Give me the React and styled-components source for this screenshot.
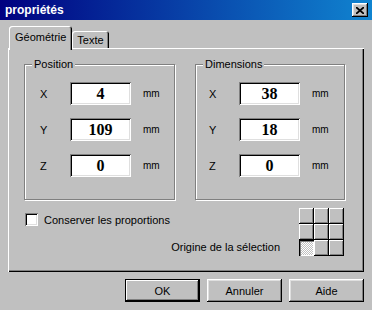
import React from "react";
import styled, { createGlobalStyle, css } from "styled-components";

const GlobalStyle = createGlobalStyle`
  body {
    margin: 0;
    background: #c0c0c0;
    font-family: "Liberation Sans", Arial, sans-serif;
    font-size: 11px;
    color: #000;
  }
`;

const raised = css`
  box-shadow: inset -1px -1px #000, inset 1px 1px #fff, inset -2px -2px #808080,
    inset 2px 2px #dfdfdf;
`;

const sunken = css`
  box-shadow: inset 1px 1px #808080, inset -1px -1px #fff, inset 2px 2px #000,
    inset -2px -2px #dfdfdf;
`;

const Window = styled.div`
  width: 372px;
  height: 310px;
  overflow: hidden;
  background: #c0c0c0;
  display: flex;
  flex-direction: column;
`;

const TitleBar = styled.div`
  height: 20px;
  flex-shrink: 0;
  display: flex;
  align-items: center;
  justify-content: space-between;
  padding: 0 4px 0 5px;
  background: linear-gradient(to right, #000080, #1084d0);
`;

const Title = styled.span`
  color: #fff;
  font-weight: bold;
  font-size: 12px;
`;

const CloseButton = styled.button`
  width: 16px;
  height: 14px;
  padding: 0;
  border: none;
  background: #c0c0c0;
  display: flex;
  align-items: center;
  justify-content: center;
  ${raised}
`;

const Body = styled.div`
  padding: 8px 8px 0 8px;
  display: flex;
  flex-direction: column;
`;

const TabStrip = styled.div`
  display: flex;
  align-items: flex-end;
  height: 20px;
  padding-left: 1px;
`;

const Tab = styled.div`
  position: relative;
  z-index: ${(p) => (p.$active ? 1 : 0)};
  height: ${(p) => (p.$active ? 22 : 17)}px;
  margin-bottom: ${(p) => (p.$active ? -2 : 0)}px;
  padding: 0 ${(p) => (p.$active ? 6 : 5)}px ${(p) => (p.$active ? 2 : 0)}px;
  display: flex;
  align-items: center;
  background: #c0c0c0;
  border-radius: 3px 3px 0 0;
  box-shadow: inset 1px 1px #fff, inset -1px 0 #000, inset -2px 0 #808080;
`;

const Panel = styled.div`
  height: 224px;
  box-sizing: border-box;
  padding: 10px 19px 0 16px;
  box-shadow: inset 1px 1px #fff, inset -1px -1px #000, inset -2px -2px #808080;
`;

const Groups = styled.div`
  display: flex;
  justify-content: space-between;
`;

const GroupBox = styled.fieldset`
  width: ${(p) => p.$width}px;
  box-sizing: border-box;
  margin: 0;
  padding: 11px 0 22px 0;
  border: 1px solid #808080;
  box-shadow: 1px 1px 0 #fff, inset 1px 1px 0 #fff;
`;

const Legend = styled.legend`
  margin-left: 7px;
  padding: 0 2px;
  line-height: 13px;
  background: #c0c0c0;
`;

const Fields = styled.div`
  display: grid;
  grid-template-columns: 30px 61px auto;
  row-gap: 13px;
  align-items: center;
  padding-left: ${(p) => p.$inset}px;
`;

const AxisLabel = styled.span`
  font-size: 11px;
`;

const NumberBox = styled.div`
  height: 23px;
  background: #fff;
  display: flex;
  align-items: center;
  justify-content: center;
  font-family: "Liberation Serif", "Times New Roman", serif;
  font-weight: bold;
  font-size: 16px;
  ${sunken}
`;

const Unit = styled.span`
  margin-left: 12px;
  font-size: 10px;
`;

const Options = styled.div`
  margin-top: 8px;
  display: flex;
  justify-content: space-between;
  align-items: flex-start;
`;

const CheckLabel = styled.label`
  margin: 5px 0 0 1px;
  display: flex;
  align-items: center;
  gap: 6px;
`;

const CheckBox = styled.span`
  width: 13px;
  height: 13px;
  background: #fff;
  ${sunken}
`;

const OriginArea = styled.div`
  display: flex;
  align-items: flex-end;
  gap: 19px;
  margin-right: 1px;
`;

const OriginLabel = styled.span`
  line-height: 13px;
  margin-bottom: 2px;
`;

const OriginGrid = styled.div`
  display: grid;
  grid-template-columns: repeat(3, 15px);
  grid-template-rows: repeat(3, 16px);
`;

const Cell = styled.div`
  background: #c0c0c0;
  ${(p) =>
    p.$selected
      ? css`
          background: repeating-conic-gradient(#fff 0 25%, #c0c0c0 0 50%) 0 0 / 2px 2px;
          box-shadow: inset 1px 1px #000, inset 2px 2px #808080, inset -1px -1px #fff;
        `
      : css`
          box-shadow: inset -1px -1px #000, inset 1px 1px #fff, inset -2px -2px #808080;
        `}
`;

const ButtonRow = styled.div`
  margin-top: 7px;
  display: flex;
  justify-content: flex-end;
  gap: 7px;
`;

const Button = styled.button`
  width: 75px;
  height: 23px;
  padding: 0;
  border: none;
  background: #c0c0c0;
  font-family: "Liberation Sans", Arial, sans-serif;
  font-size: 11px;
  color: #000;
  ${(p) =>
    p.$default
      ? css`
          box-shadow: inset 0 0 0 1px #000, inset -2px -2px #000, inset 2px 2px #fff,
            inset -3px -3px #808080;
        `
      : raised}
`;

const rowsPosition = [
  ["X", "4"],
  ["Y", "109"],
  ["Z", "0"],
];

const rowsDimensions = [
  ["X", "38"],
  ["Y", "18"],
  ["Z", "0"],
];

const FieldGroup = ({ title, width, inset, rows }) => (
  <GroupBox $width={width}>
    <Legend>{title}</Legend>
    <Fields $inset={inset}>
      {rows.map(([axis, value]) => (
        <React.Fragment key={axis}>
          <AxisLabel>{axis}</AxisLabel>
          <NumberBox>{value}</NumberBox>
          <Unit>mm</Unit>
        </React.Fragment>
      ))}
    </Fields>
  </GroupBox>
);

const App = () => {
  return (
    <>
      <GlobalStyle />
      <Window>
        <TitleBar>
          <Title>propriétés</Title>
          <CloseButton>
            <svg width="8" height="7" viewBox="0 0 8 7">
              <path d="M0 0 L8 7 M8 0 L0 7" stroke="#000" strokeWidth="1.7" />
            </svg>
          </CloseButton>
        </TitleBar>
        <Body>
          <TabStrip>
            <Tab $active>Géométrie</Tab>
            <Tab>Texte</Tab>
          </TabStrip>
          <Panel>
            <Groups>
              <FieldGroup title="Position" width={151} inset={15} rows={rowsPosition} />
              <FieldGroup title="Dimensions" width={150} inset={13} rows={rowsDimensions} />
            </Groups>
            <Options>
              <CheckLabel>
                <CheckBox />
                Conserver les proportions
              </CheckLabel>
              <OriginArea>
                <OriginLabel>Origine de la sélection</OriginLabel>
                <OriginGrid>
                  {Array.from({ length: 9 }, (_, i) => (
                    <Cell key={i} $selected={i === 6} />
                  ))}
                </OriginGrid>
              </OriginArea>
            </Options>
          </Panel>
          <ButtonRow>
            <Button $default>OK</Button>
            <Button>Annuler</Button>
            <Button>Aide</Button>
          </ButtonRow>
        </Body>
      </Window>
    </>
  );
};

export default App;
